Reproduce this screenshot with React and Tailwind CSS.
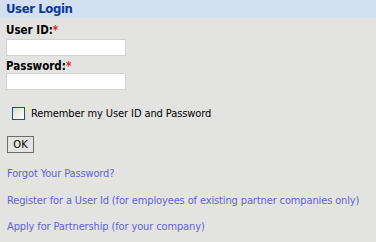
export default function App() {
  const links = [
    "Forgot Your Password?",
    "Register for a User Id (for employees of existing partner companies only)",
    "Apply for Partnership (for your company)",
  ];
  return (
    <div className="w-[376px] h-[242px] bg-[#e3e4e1] overflow-hidden font-['DejaVu_Sans_Condensed','DejaVu_Sans',sans-serif] text-[11px] text-black">
      <div className="h-[18px] bg-[#d3e0f1] pl-[6px] leading-[18px] text-[13px] tracking-[-0.4px] font-bold text-[#0b3a9e]">
        User Login
      </div>
      <div className="px-[6px]">
        <div className="mt-[6px] font-bold text-[11.5px] leading-[13px]">
          User ID:<span className="text-[#e0202a]">*</span>
        </div>
        <input type="text" className="block mt-[2px] w-[120px] h-[17px] bg-white border border-[#d2d2d2] outline-none" />
        <div className="mt-[4px] font-bold text-[11.5px] leading-[13px]">
          Password:<span className="text-[#e0202a]">*</span>
        </div>
        <input type="password" className="block w-[120px] h-[17px] bg-white border border-[#d2d2d2] outline-none" />
        <label className="flex items-center mt-[17px] ml-[6px] gap-[6px]">
          <span className="w-[13px] h-[13px] border border-[#1c5180] bg-gradient-to-br from-[#dcdcd7] to-white" />
          <span className="leading-[13px] tracking-[-0.1px]">Remember my User ID and Password</span>
        </label>
        <button className="block mt-[16px] ml-[1px] w-[27px] h-[17px] border border-[#6b6b6b] bg-[#e3e4e1] text-[11px] leading-[15px]">
          OK
        </button>
        <div className="mt-[14px] flex flex-col gap-[13.5px] pl-[1px]">
          {links.map((l) => (
            <a key={l} href="#" className="block leading-[13px] tracking-[-0.13px] text-[#6262d4]">
              {l}
            </a>
          ))}
        </div>
      </div>
    </div>
  );
}
